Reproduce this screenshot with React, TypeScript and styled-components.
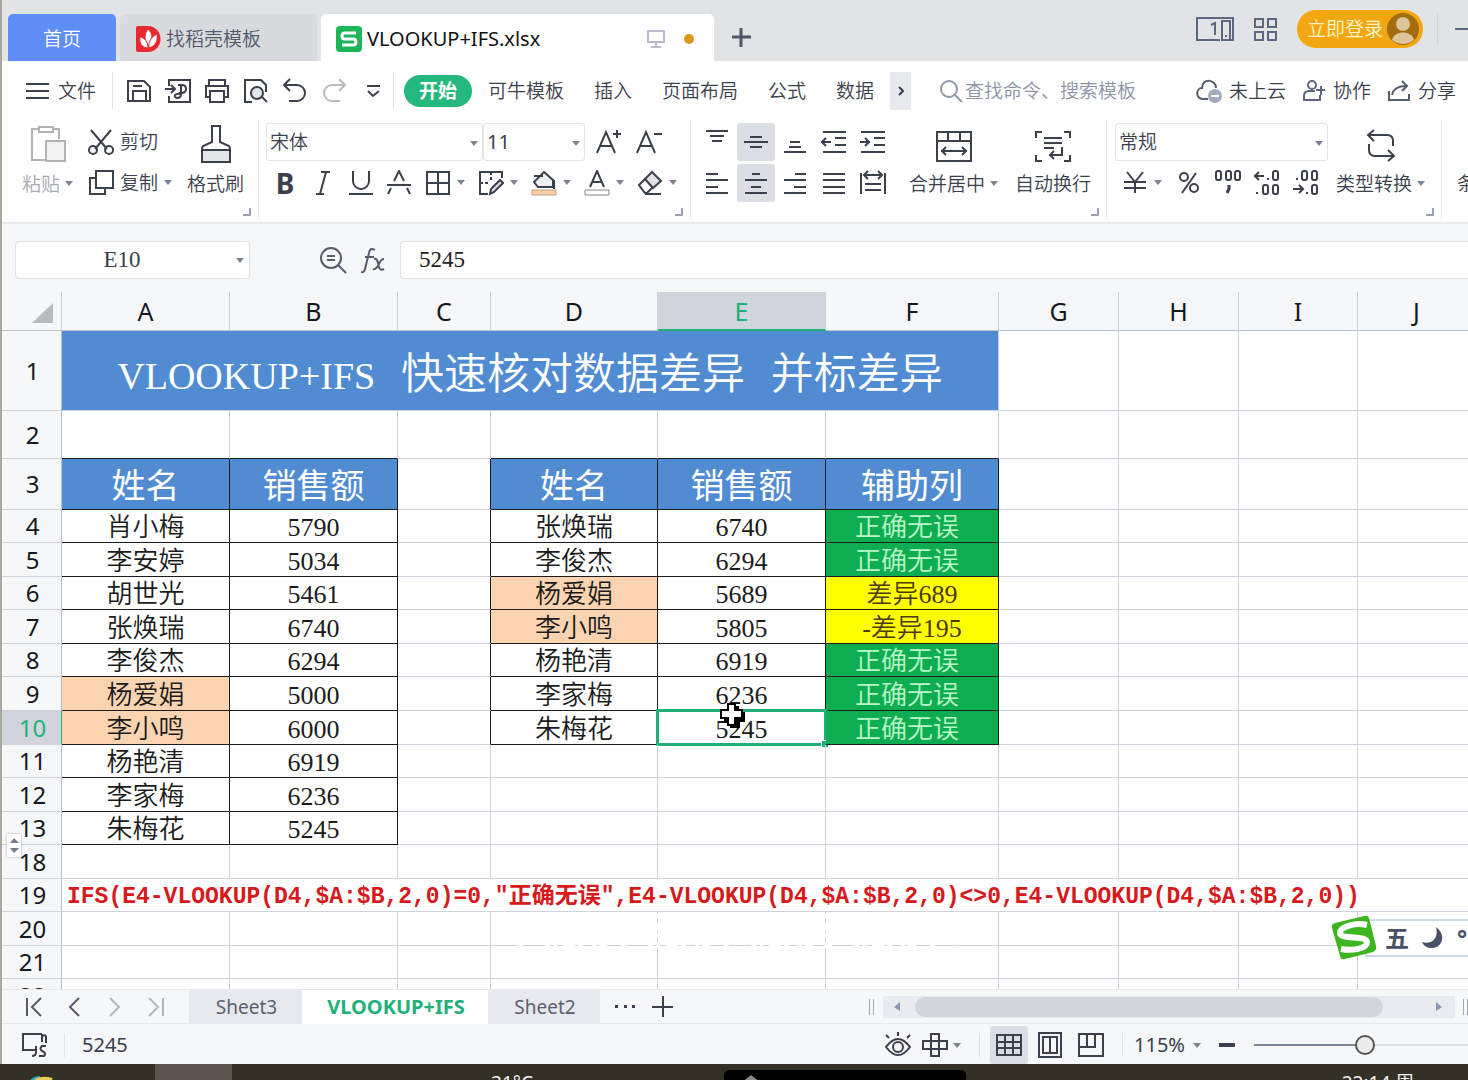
import React from "react";
import styled, { createGlobalStyle, css } from "styled-components";

const ui = `"Noto Sans", "Noto Sans CJK SC", sans-serif`;
const song = `"Liberation Serif", "Noto Sans CJK SC", serif`;
const ink = "#3b404d";
const green = "#22b07a";

const Global = createGlobalStyle`
  * { box-sizing: border-box; }
  body { margin: 0; background: #f5f7f9; overflow: hidden; }
  button, input, select { font: inherit; color: inherit; background: none; border: 0; padding: 0; margin: 0; border-radius: 0; }
  svg { display: block; flex: none; }
`;

/* ---------- shell ---------- */
const Shell = styled.div`
  height: 100vh;
  display: flex;
  flex-direction: column;
  overflow: hidden;
  font-family: ${ui};
  font-size: 19px;
  line-height: 28px;
  font-weight: 350;
  color: ${ink};
  white-space: nowrap;
`;
const Window = styled.div`
  flex: 1;
  min-height: 0;
  display: flex;
  flex-direction: column;
  border-left: 2px solid #a9a69d;
  overflow: hidden;
`;
const Row = styled.div<{ $gap?: number }>`
  display: flex;
  align-items: center;
  gap: ${(p) => p.$gap ?? 0}px;
`;
const Divider = styled.span<{ $h: number; $l?: number; $r?: number }>`
  flex: none;
  width: 1px;
  height: ${(p) => p.$h}px;
  margin-left: ${(p) => p.$l ?? 0}px;
  margin-right: ${(p) => p.$r ?? 0}px;
  background: #dfe1e5;
`;
const Spacer = styled.span`
  flex: 1;
`;
const Plain = styled.button`
  display: flex;
  align-items: center;
  flex: none;
`;

/* ---------- icons ---------- */
type IconProps = { w?: number; h?: number; c?: string; s?: number; children: React.ReactNode };
const Icon = ({ w = 26, h = 26, c = ink, s = 2, children }: IconProps) => (
  <svg width={w} height={h} viewBox={`0 0 ${w} ${h}`} fill="none" stroke={c} strokeWidth={s} aria-hidden="true">
    {children}
  </svg>
);
const Caret = ({ c = "#7c8494" }: { c?: string }) => (
  <svg width="8" height="5" viewBox="0 0 8 5" fill={c} aria-hidden="true">
    <path d="M0 0h8L4 5z" />
  </svg>
);

/* ---------- document tabs ---------- */
const TabStrip = styled.header`
  display: flex;
  flex: none;
  align-items: flex-end;
  height: 61px;
  padding-left: 6px;
  background: #e2e3e5;
`;
const DocTab = styled.button<{ $w: number; $kind: "home" | "idle" | "open" }>`
  display: flex;
  align-items: center;
  flex: none;
  gap: 5px;
  width: ${(p) => p.$w}px;
  height: 47px;
  margin-right: 4px;
  padding: 2px 16px 0;
  border-radius: 5px 5px 0 0;
  ${(p) => p.$kind === "home" && css`background: #5f8ff6; color: #fff; justify-content: center;`}
  ${(p) => p.$kind === "idle" && css`background: #d9dadd; color: #50586a;`}
  ${(p) => p.$kind === "open" && css`background: #fff; color: #111; margin-right: 0; font-size: 20px; font-weight: 400; padding-left: 15px;`}
`;
const Dot = styled.span`
  width: 10px;
  height: 10px;
  margin: 0 4px 0 14px;
  border-radius: 50%;
  background: #dd9615;
`;
const NewTab = styled(Plain)`
  height: 47px;
  padding: 0 18px;
`;
const Account = styled.div`
  display: flex;
  align-items: center;
  align-self: flex-start;
  height: 58px;
  gap: 20px;
`;
const Login = styled.button`
  display: flex;
  align-items: center;
  gap: 4px;
  height: 38px;
  width: 126px;
  padding-left: 10px;
  border-radius: 19px;
  background: #f2a60f;
  color: #fff6d0;
`;
const Minimise = styled(Row)`
  margin-left: -6px;
`;
const Bar = styled.span`
  width: 1px;
  height: 31px;
  margin-right: 17px;
  background: #cfd1d6;
`;

/* ---------- menu bar ---------- */
const MenuBar = styled.nav`
  display: flex;
  align-items: center;
  flex: none;
  height: 59px;
  padding: 0 12px 0 24px;
  background: #fff;
`;
const FileMenu = styled(Plain)`
  gap: 9px;
`;
const Quick = styled.div`
  display: flex;
  align-items: center;
  gap: 13px;
  margin: 0 7px 0 13px;
`;
const Menus = styled.div`
  display: flex;
  align-items: center;
  gap: 30px;
  margin: 0 16px;
`;
const ActiveMenu = styled.button`
  width: 68px;
  height: 32px;
  margin-left: 10px;
  border-radius: 16px;
  background: #25b87e;
  color: #fff;
  font-weight: 700;
`;
const More = styled(Plain)`
  justify-content: center;
  width: 21px;
  height: 38px;
  background: #e6e9ed;
`;
const Search = styled.label`
  display: flex;
  align-items: center;
  gap: 2px;
  width: 200px;
  margin-left: 28px;
  input { width: 174px; outline: none; }
  input::placeholder { color: #8c93a5; opacity: 1; }
`;
const Actions = styled.div`
  display: flex;
  align-items: center;
  gap: 16px;
  button { gap: 7px; }
`;

/* ---------- ribbon ---------- */
const Ribbon = styled.section`
  display: flex;
  flex: none;
  height: 104px;
  overflow: hidden;
  background: #fff;
  border-bottom: 2px solid #e9eaec;
`;
const Group = styled.div<{ $w: number; $pad: number }>`
  display: grid;
  grid-template-rows: 84px 12px;
  flex: none;
  width: ${(p) => p.$w}px;
  height: 99px;
  padding-left: ${(p) => p.$pad}px;
  border-right: 1px solid #ebecef;
`;
const GroupBody = styled.div<{ $gap?: number }>`
  display: flex;
  align-items: stretch;
  gap: ${(p) => p.$gap ?? 0}px;
`;
const Launcher = styled.button`
  justify-self: end;
  align-self: end;
  width: 8px;
  height: 8px;
  margin-right: 7px;
  border-right: 2px solid #9aa0ae;
  border-bottom: 2px solid #9aa0ae;
`;
const TwoRows = styled.div`
  display: grid;
  grid-template-rows: 41px 41px;
  align-content: start;
  align-items: center;
  padding-top: 1px;
`;
const Big = styled.button<{ $faded?: boolean }>`
  display: grid;
  grid-template-rows: 43px 41px;
  justify-items: center;
  align-items: center;
  align-self: start;
  flex: none;
  color: ${(p) => (p.$faded ? "#a9abb0" : ink)};
  > svg { align-self: end; }
`;
const Label = styled.span`
  display: flex;
  align-items: center;
  gap: 5px;
`;
const Tool = styled.button<{ $w?: number; $on?: boolean }>`
  display: flex;
  align-items: center;
  justify-content: center;
  flex: none;
  gap: 6px;
  width: ${(p) => p.$w ?? 38}px;
  height: 38px;
  border-radius: 3px;
  background: ${(p) => (p.$on ? "#dbdfe5" : "transparent")};
`;
const TextTool = styled(Plain)`
  gap: 6px;
`;
const Bold = styled.span`
  font: 700 28px/30px "Noto Sans", sans-serif;
`;
const Picker = styled.label<{ $w: number; $digits?: boolean }>`
  position: relative;
  flex: none;
  display: block;
  width: ${(p) => p.$w}px;
  height: 38px;
  border: 1px solid #e4e5e8;
  border-radius: 3px;
  font-weight: ${(p) => (p.$digits ? 400 : 350)};
  font-size: ${(p) => (p.$digits ? 20 : 19)}px;
  select { appearance: none; width: 100%; height: 100%; padding-left: 3px; outline: none; }
  svg { position: absolute; right: 4px; top: 17px; pointer-events: none; }
`;

/* ---------- formula bar ---------- */
const FormulaBar = styled.section`
  display: flex;
  align-items: center;
  flex: none;
  height: 68px;
  padding: 4px 0 0 13px;
  background: #f5f7f9;
  font-family: ${song};
  font-size: 23px;
`;
const NameBox = styled.label`
  display: flex;
  align-items: center;
  width: 235px;
  height: 38px;
  margin-right: 70px;
  padding-right: 5px;
  border: 1px solid #dfe1e4;
  border-radius: 4px;
  background: #fff;
  input { width: 100%; min-width: 0; text-align: center; padding-right: 8px; outline: none; }
`;
const FormulaInput = styled.input`
  flex: 1;
  min-width: 0;
  height: 38px;
  margin-left: 14px;
  && { padding: 0 18px; border: 1px solid #dfe1e4; border-right: 0; border-radius: 4px 0 0 4px; background: #fff; color: #222; }
`;

/* ---------- sheet ---------- */
const SheetArea = styled.main`
  position: relative;
  flex: 1;
  min-height: 0;
  overflow: hidden;
  background: #fff;
`;
const Grid = styled.table`
  width: 1474px;
  min-width: 100%;
  table-layout: fixed;
  border-collapse: separate;
  border-spacing: 0;
`;
const line = "#cdd2dc";
const Head = styled.th<{ $on?: boolean }>`
  height: 39px;
  padding: 0;
  font-size: 25px;
  font-weight: 400;
  color: ${(p) => (p.$on ? green : "#16181d")};
  background: ${(p) => (p.$on ? "#d1d4db" : "#f5f7f9")};
  border-right: 1px solid ${line};
  border-bottom: ${(p) => (p.$on ? `2px solid ${green}` : "1px solid #bcc3d0")};
`;
const Corner = styled(Head)`
  svg { margin: 4px 0 0 30px; }
`;
const RowHead = styled.th<{ $h: number; $on?: boolean }>`
  height: ${(p) => p.$h}px;
  padding: 0 0 0 2px;
  font-size: 24px;
  line-height: 30px;
  font-weight: 400;
  color: ${(p) => (p.$on ? green : "#16181d")};
  background: ${(p) => (p.$on ? "#d1d4db" : "#f5f7f9")};
  border-right: 1px solid ${(p) => (p.$on ? green : "#b5bdcc")};
  border-bottom: 1px solid ${line};
`;
const fills = {
  none: css``,
  title: css`background: #518cd3; color: #fff; font-size: 43px; padding-top: 12px;`,
  head: css`background: #518cd3; color: #fff; font-size: 34px; font-weight: 400; padding-top: 6px;`,
  peach: css`background: #fad4b0;`,
  ok: css`background: #0eae50; color: #b9f7cb;`,
  diff: css`background: #ffff00; color: #4a3a10;`,
};
type Fill = keyof typeof fills;
const Cell = styled.td<{ $fill?: Fill; $r?: string; $b?: string }>`
  position: relative;
  padding: 4px 0 0;
  overflow: visible;
  text-align: center;
  font-family: ${song};
  font-size: 26px;
  line-height: 28px;
  color: #1b1b1b;
  border-right: 1px solid ${(p) => p.$r ?? line};
  border-bottom: 1px solid ${(p) => p.$b ?? line};
  ${(p) => fills[p.$fill ?? "none"]}
`;
const Title = styled.span`
  font-family: "Liberation Mono", "Noto Sans CJK SC", monospace;
  font-weight: 350;
`;
const Latin = styled.span`
  font-family: "Liberation Serif", serif;
  font-size: 38px;
`;
const Formula = styled.td`
  padding: 4px 0 0 5px;
  font-family: "Liberation Mono", "Noto Sans CJK SC", monospace;
  font-size: 23px;
  line-height: 28px;
  font-weight: 700;
  color: #d7191c;
  border-bottom: 1px solid ${line};
`;
const OkText = styled.span`
  padding-right: 10px;
`;
const Selection = styled.span`
  position: absolute;
  inset: -2px;
  border: 3px solid ${green};
  &::after {
    content: "";
    position: absolute;
    right: -4px;
    bottom: -4px;
    width: 6px;
    height: 6px;
    background: ${green};
    outline: 1px solid #fff;
  }
`;
const Pointer = styled.svg`
  position: absolute;
  left: 61px;
  top: -9px;
`;
const Expander = styled.button`
  position: absolute;
  left: 5px;
  top: 542px;
  display: grid;
  align-content: center;
  justify-items: center;
  gap: 5px;
  width: 14px;
  height: 23px;
  background: #fff;
  box-shadow: 0 0 2px #9aa0ae;
`;
const Residue = styled.svg`
  position: absolute;
  left: 516px;
  top: 622px;
`;
const Ime = styled.div`
  position: absolute;
  right: 0;
  top: 623px;
  display: flex;
  align-items: center;
  height: 45px;
  color: #4a5068;
`;
const ImeBar = styled.div`
  display: flex;
  align-items: center;
  gap: 12px;
  width: 103px;
  height: 38px;
  margin-left: -12px;
  padding-left: 18px;
  overflow: hidden;
  border: 2px solid #cfd9e2;
  border-right: 0;
  background: #fff;
  font-size: 24px;
  font-weight: 700;
`;
const ImeLogo = styled.svg`
  z-index: 1;
`;

/* ---------- sheet tabs and status ---------- */
const SheetBar = styled.footer`
  display: flex;
  align-items: center;
  flex: none;
  height: 35px;
  border-top: 1px solid #e6e8ec;
  border-bottom: 1px solid #e6e8ec;
  background: #f5f7f9;
`;
const SheetNav = styled.div`
  display: flex;
  gap: 24px;
  width: 187px;
  padding-left: 23px;
`;
const SheetTab = styled.button<{ $w: number; $on?: boolean }>`
  flex: none;
  width: ${(p) => p.$w}px;
  height: 34px;
  padding-left: 2px;
  background: ${(p) => (p.$on ? "#fff" : "#e8e9ee")};
  color: ${(p) => (p.$on ? green : "#5a6070")};
  font-size: ${(p) => (p.$on ? 20 : 19)}px;
  font-weight: ${(p) => (p.$on ? 700 : 400)};
`;
const SheetTools = styled(Row)`
  padding-left: 14px;
`;
const Scroll = styled.div`
  display: flex;
  align-items: center;
  justify-content: space-between;
  width: 572px;
  height: 22px;
  margin: 0 8px 0 9px;
  padding: 0 13px 0 11px;
  background: #e8ebf0;
`;
const Thumb = styled.div`
  width: 468px;
  height: 20px;
  margin-right: 38px;
  border-radius: 10px;
  background: #d2d5d9;
`;
const Grip = styled.span`
  flex: none;
  width: 5px;
  height: 16px;
  border: solid #a3a9b5;
  border-width: 0 1px;
`;
const StatusBar = styled.footer`
  display: flex;
  align-items: center;
  flex: none;
  height: 40px;
  padding: 2px 0 0 20px;
  background: #f5f7f9;
  font-size: 20px;
  font-weight: 400;
`;
const Views = styled.div`
  display: flex;
  align-items: center;
  gap: 3px;
`;
const Zoom = styled.label`
  display: flex;
  align-items: center;
  width: 67px;
  margin-right: 18px;
  select { appearance: none; width: 59px; outline: none; }
`;
const Slider = styled.input`
  && { appearance: none; width: 214px; height: 20px; margin-left: 19px; background: linear-gradient(90deg, #7d879c 52%, #dfe2e8 52%) center / 100% 2px no-repeat; }
  &::-webkit-slider-thumb { appearance: none; width: 20px; height: 20px; border-radius: 50%; border: 2px solid #555; background: #ececec; }
`;
const Taskbar = styled.div`
  display: flex;
  flex: none;
  height: 16px;
  overflow: hidden;
  background: #343026;
  color: #f3f3f3;
  font-weight: 400;
`;
const Task = styled.span<{ $w: number; $bg?: string }>`
  flex: none;
  display: flex;
  justify-content: center;
  width: ${(p) => p.$w}px;
  height: 40px;
  padding-top: 5px;
  background: ${(p) => p.$bg ?? "none"};
`;
const Player = styled.span`
  flex: none;
  width: 242px;
  height: 40px;
  margin-top: 6px;
  padding: 5px 0 0 18px;
  border-radius: 5px;
  background: #000;
`;

/* ---------- drawings ---------- */
const AlignIcon = ({ d }: { d: string }) => (
  <Icon>
    <path d={d} />
  </Icon>
);
const UnderA = () => <path d="M6 17 13 1l7 16M8 12h10" />;

const rowsLeft = [
  ["肖小梅", "5790"], ["李安婷", "5034"], ["胡世光", "5461"], ["张焕瑞", "6740"], ["李俊杰", "6294"],
  ["杨爱娟", "5000"], ["李小鸣", "6000"], ["杨艳清", "6919"], ["李家梅", "6236"], ["朱梅花", "5245"],
];
const rowsRight = [
  ["张焕瑞", "6740", "正确无误"], ["李俊杰", "6294", "正确无误"], ["杨爱娟", "5689", "差异689"],
  ["李小鸣", "5805", "-差异195"], ["杨艳清", "6919", "正确无误"], ["李家梅", "6236", "正确无误"], ["朱梅花", "5245", "正确无误"],
];
const heights = [33, 34, 33, 34, 33, 34, 34, 33, 34, 33];
const cols = [60, 168, 168, 93, 167, 168, 173, 120, 120, 119, 118];
const black = "#1c1c1c";
const marked = ["杨爱娟", "李小鸣"];
const Blanks = ({ n }: { n: number }) => <>{Array.from({ length: n }, (_, i) => <Cell key={i} />)}</>;

const DataRow = ({ i }: { i: number }) => {
  const [name, sum] = rowsLeft[i];
  const right = rowsRight[i];
  const active = i === 6;
  return (
    <tr>
      <RowHead $h={heights[i]} $on={active} scope="row">{i + 4}</RowHead>
      <Cell $r={black} $b={black} $fill={i > 4 && marked.includes(name) ? "peach" : "none"}>{name}</Cell>
      <Cell $r={black} $b={black}>{sum}</Cell>
      {right ? (
        <>
          <Cell $r={black} />
          <Cell $r={black} $b={black} $fill={marked.includes(right[0]) ? "peach" : "none"}>{right[0]}</Cell>
          <Cell $r={black} $b={black}>
            {right[1]}
            {active && <Selection />}
            {active && (
              <Pointer width="27" height="27" viewBox="0 0 27 27" aria-hidden="true">
                <path d="M10 4h10v6h6v10h-5v6H11v-5H5V10h5z" fill="#000" />
                <path d="M9 2h7v6h7v8h-7v7H9v-7H2V8h7z" fill="#fff" stroke="#000" strokeWidth="2" />
              </Pointer>
            )}
          </Cell>
          <Cell $r={black} $b={black} $fill={right[2] === "正确无误" ? "ok" : "diff"}>
            {right[2] === "正确无误" ? <OkText>{right[2]}</OkText> : right[2]}
          </Cell>
          <Blanks n={4} />
        </>
      ) : (
        <Blanks n={8} />
      )}
    </tr>
  );
};

const Sheet = () => (
  <SheetArea>
    <Grid>
      <colgroup>{cols.map((w, i) => <col key={i} style={{ width: w }} />)}</colgroup>
      <thead>
        <tr>
          <Corner aria-label="全选">
            <svg width="21" height="20" viewBox="0 0 21 20"><path d="M21 0v20H0z" fill="#b9bbbf" /></svg>
          </Corner>
          {"ABCDEFGHIJ".split("").map((c) => <Head key={c} scope="col" $on={c === "E"}>{c}</Head>)}
        </tr>
      </thead>
      <tbody>
        <tr>
          <RowHead $h={80} scope="row">1</RowHead>
          <Cell colSpan={6} $fill="title"><Title><Latin>VLOOKUP+IFS</Latin> 快速核对数据差异 并标差异</Title></Cell>
          <Blanks n={4} />
        </tr>
        <tr>
          <RowHead $h={48} scope="row">2</RowHead>
          <Cell $b={black} /><Cell $b={black} /><Cell /><Cell $b={black} /><Cell $b={black} /><Cell $b={black} />
          <Blanks n={4} />
        </tr>
        <tr>
          <RowHead $h={51} scope="row">3</RowHead>
          {["姓名", "销售额", "", "姓名", "销售额", "辅助列"].map((t, i) => (
            <Cell key={i} $r={black} $b={t ? black : undefined} $fill={t ? "head" : "none"}>{t}</Cell>
          ))}
          <Blanks n={4} />
        </tr>
        {rowsLeft.map((_, i) => <DataRow key={i} i={i} />)}
        <tr><RowHead $h={34} scope="row">18</RowHead><Blanks n={10} /></tr>
        <tr>
          <RowHead $h={33} scope="row">19</RowHead>
          <Formula colSpan={10}>IFS(E4-VLOOKUP(D4,$A:$B,2,0)=0,"正确无误",E4-VLOOKUP(D4,$A:$B,2,0)&lt;&gt;0,E4-VLOOKUP(D4,$A:$B,2,0))</Formula>
        </tr>
        {[[20, 34], [21, 33], [22, 34]].map(([n, h]) => (
          <tr key={n}><RowHead $h={h} scope="row">{n}</RowHead><Blanks n={10} /></tr>
        ))}
      </tbody>
    </Grid>
    <Expander aria-label="展开隐藏行">
      <svg width="9" height="16" viewBox="0 0 9 16" fill="#737a8a"><path d="M0 5h9L4 0zM0 10h9l-5 5z" /></svg>
    </Expander>
    <Residue width="440" height="36" viewBox="0 0 440 36" fill="none" stroke="#fff" strokeWidth="3" aria-hidden="true">
      <path d="M0 32h440" strokeDasharray="5 22 5 4 3 6 12 3 5 9 4 3 8 14" />
      <path d="M140 0v34M308 0v34" strokeDasharray="4 5 7 3" />
    </Residue>
    <Ime>
      <ImeLogo width="46" height="45" viewBox="0 0 46 45" aria-hidden="true">
        <path d="M4 8 33 1q4-1 5 2l7 28q1 4-3 6L14 44q-4 1-5-3L1 13q-1-4 3-5z" fill="#3cb521" />
        <path d="M36 10C24 7 9 12 9 18c0 7 27 2 27 9 0 7-15 9-26 7" fill="none" stroke="#fff" strokeWidth="6" />
      </ImeLogo>
      <ImeBar>
        五
        <svg width="24" height="24" viewBox="0 0 24 24"><path d="M15 1c11 8 6 21-4 21-5 0-8-2-10-6 10 3 17-4 14-15z" fill="#4a5068" /></svg>
        °
      </ImeBar>
    </Ime>
  </SheetArea>
);

export default function App() {
  return (
    <Shell>
      <Global />
      <Window>
        <TabStrip>
          <DocTab $w={108} $kind="home">首页</DocTab>
          <DocTab $w={197} $kind="idle">
            <svg width="25" height="26" viewBox="0 0 25 26">
              <path d="M2 0h9c18 0 18 26 0 26H2q-2 0-2-2V2q0-2 2-2z" fill="#e9292f" />
              <path d="M12 3c5 4 5 11 1 17C8 15 8 8 12 3z" fill="#fff" stroke="#e9292f" />
              <path d="M4 11c5 1 8 5 8 11-6 0-9-5-8-11zM21 8c-6 3-9 8-8 14 7-2 9-8 8-14z" fill="#fff" stroke="#e9292f" />
            </svg>
            找稻壳模板
          </DocTab>
          <DocTab $w={393} $kind="open">
            <svg width="26" height="26" viewBox="0 0 26 26">
              <rect width="26" height="26" rx="4" fill="#1eb45a" />
              <path d="M20 7H9Q6 7 6 10t3 3h8q3 0 3 3t-3 3H6" fill="none" stroke="#fff" strokeWidth="3" />
            </svg>
            <span>VLOOKUP+IFS.xlsx</span>
            <Spacer />
            <Icon w={18} h={18} c="#b6bccb"><path d="M1 1h16v11H1zM9 12v5M4 17h10" /></Icon>
            <Dot />
          </DocTab>
          <NewTab aria-label="新建标签"><Icon w={19} h={19} c="#4d566d" s={3}><path d="M9 0v19M0 9h19" /></Icon></NewTab>
          <Spacer />
          <Account>
            <Plain aria-label="窗口">
              <Icon w={38} h={24} c="#5d6780">
                <path d="M24 23H1V1h36v22h-5M26 4h8v19h-8zM29 19h2" />
                <path d="M15 8l4-2v12" />
              </Icon>
            </Plain>
            <Plain aria-label="应用"><Icon w={23} h={23} c="#5d6780"><path d="M1 1h8v8H1zM14 1h8v8h-8zM1 14h8v8H1zM14 14h8v8h-8z" /></Icon></Plain>
            <Login>
              立即登录
              <svg width="32" height="32" viewBox="0 0 32 32">
                <circle cx="16" cy="16" r="16" fill="#a36c0c" />
                <circle cx="16" cy="11" r="7" fill="#dfc59a" />
                <path d="M5 27c2-10 20-10 22 0q-11 8-22 0z" fill="#dfc59a" />
              </svg>
            </Login>
            <Minimise>
              <Bar />
              <Icon w={13} h={20} c="#5d6780"><path d="M0 10h13" /></Icon>
            </Minimise>
          </Account>
        </TabStrip>

        <MenuBar>
          <FileMenu><Icon w={23} h={16}><path d="M0 1h23M0 8h23M0 15h23" /></Icon>文件</FileMenu>
          <Divider $h={37} $l={16} />
          <Quick>
            <Plain aria-label="保存"><Icon><path d="M2 3h16l6 6v14H2zM7 23V13h13v10M7 8h9" /></Icon></Plain>
            <Plain aria-label="输出PDF"><Icon><path d="M4 8V2h21v22H4v-6M0 11h9M6 7l4 4-4 4M13 7h4q4 0 4 4t-5 4h-2M16 8v8q0 4-4 4-3-1-2-3 2-2 6-1" /></Icon></Plain>
            <Plain aria-label="打印"><Icon><path d="M5 8V2h16v6M6 19H2V8h22v11h-4M6 13h14v11H6zM6 8h14" /></Icon></Plain>
            <Plain aria-label="打印预览"><Icon><path d="M9 24H2V2h16l5 5v7" /><circle cx="14" cy="15" r="6" fill="#e2e5ea" /><path d="M19 19l5 5" /></Icon></Plain>
            <Plain aria-label="撤销"><Icon><path d="M8 1 2 7l6 6M3 7h12a8 8 0 0 1 0 16H7" /></Icon></Plain>
            <Plain aria-label="恢复"><Icon c="#b8bbc1"><path d="m18 1 6 6-6 6M23 7H11a8 8 0 0 0 0 16h8" /></Icon></Plain>
            <Plain aria-label="自定义"><Icon><path d="M7 8h13M8 13l5 5 6-5" /></Icon></Plain>
          </Quick>
          <Divider $h={37} />
          <ActiveMenu>开始</ActiveMenu>
          <Menus>
            <Plain>可牛模板</Plain><Plain>插入</Plain><Plain>页面布局</Plain><Plain>公式</Plain><Plain>数据</Plain>
          </Menus>
          <More aria-label="更多"><Icon w={6} h={10}><path d="m1 1 4 4-4 4" /></Icon></More>
          <Search>
            <Icon w={24} h={24} c="#9299a9"><circle cx="10" cy="10" r="8" /><path d="m16 16 7 7" /></Icon>
            <input placeholder="查找命令、搜索模板" aria-label="搜索" />
          </Search>
          <Spacer />
          <Actions>
            <Plain>
              <Icon w={26} h={24} c="#555c6b">
                <path d="M12 20H7C-1 19 0 9 6 9 6-1 20 0 20 9" />
                <circle cx="19" cy="17" r="6" fill="#a3abbd" stroke="#a3abbd" /><path d="M15 17h8" stroke="#fff" />
              </Icon>
              未上云
            </Plain>
            <Plain>
              <Icon w={24} h={24} c="#5d6780"><circle cx="10" cy="6" r="4" /><path d="M13 12H7q-5 0-5 5v4h16v-5M19 7v9M14 11h9" /></Icon>
              协作
            </Plain>
            <Plain>
              <Icon w={24} h={24} c="#555c6b"><path d="M2 12v9h20v-6M5 16Q7 7 19 7M15 2l5 5-5 5" /></Icon>
              分享
            </Plain>
          </Actions>
        </MenuBar>

        <Ribbon>
          <Group $w={257} $pad={20}>
            <GroupBody $gap={15}>
              <Big $faded>
                <Icon w={36} h={38} c="#b2b3b6"><path d="M9 4H2v31h13M24 4h5v10M9 2h14v5H9z" /><path d="M16 16h19v20H16z" fill="#f3f3f3" /></Icon>
                <Label>粘贴<Caret /></Label>
              </Big>
              <TwoRows>
                <TextTool>
                  <Icon><path d="M3 1l16 19M23 1 7 20" /><circle cx="5" cy="21" r="4" /><circle cx="21" cy="21" r="4" /></Icon>剪切
                </TextTool>
                <TextTool>
                  <Icon><path d="M8 8H2v16h15v-6M8 1h17v17H8z" /></Icon>复制<Caret />
                </TextTool>
              </TwoRows>
              <Big>
                <Icon w={30} h={38}><path d="M11 1h8v16l9 4q1 1 1 4H1q0-3 1-4l9-4z" /><path d="M1 25h28v12H1z" fill="#e4e6ea" /></Icon>
                <Label>格式刷</Label>
              </Big>
            </GroupBody>
            <Launcher aria-label="剪贴板设置" />
          </Group>

          <Group $w={432} $pad={7}>
            <TwoRows>
              <Row>
                <Picker $w={217}><select aria-label="字体"><option>宋体</option></select><Caret /></Picker>
                <Picker $w={102} $digits><select aria-label="字号"><option>11</option></select><Caret /></Picker>
                <Tool $w={48} aria-label="增大字号"><Icon><path d="M1 24 10 3l9 21M4 17h12M17 5h8M21 1v8" /></Icon></Tool>
                <Tool $w={32} aria-label="减小字号"><Icon><path d="M1 24 10 3l9 21M4 17h12M18 5h8" /></Icon></Tool>
              </Row>
              <Row>
                <Tool aria-label="加粗"><Bold>B</Bold></Tool>
                <Tool aria-label="倾斜"><Icon><path d="M11 2h9M6 24h8M16 2l-6 22" /></Icon></Tool>
                <Tool aria-label="下划线"><Icon><path d="M5 1v10a8 8 0 0 0 16 0V1M1 24h24" /></Icon></Tool>
                <Tool aria-label="删除线"><Icon><path d="M1 15h24M8 11l5-10 5 10M5 18l-3 6M21 18l3 6" /></Icon></Tool>
                <Tool $w={53} aria-label="边框"><Icon><path d="M2 2h22v22H2zM13 2v22M2 13h22" /></Icon><Caret /></Tool>
                <Tool $w={53} aria-label="绘制边框"><Icon><path d="M10 24H2V2h22v6" /><path d="M13 2v10M2 13h10" strokeDasharray="3 2" /><path d="m13 19 9-9 3 3-9 9-4 2z" fill="#dcdfe5" /></Icon><Caret /></Tool>
                <Tool $w={53} aria-label="填充颜色"><Icon><path d="m13 2 9 8v7H7l-4-5z" fill="#eef0f3" /><path d="M3 6h9M23 10v9" /><path d="M1 20h24v5H1z" fill="#f8cda8" stroke="#c69d7c" strokeWidth="1" /></Icon><Caret /></Tool>
                <Tool $w={53} aria-label="字体颜色"><Icon><UnderA /><path d="M1 20h24v5H1z" fill="#fff" stroke="#888" strokeWidth="1" /></Icon><Caret /></Tool>
                <Tool $w={53} aria-label="清除"><Icon><path d="m2 15 6-6 8 8-6 6H8z" /><path d="m8 9 7-7 9 9-8 7z" fill="#e0e2e6" /><path d="M8 24h16" /></Icon><Caret /></Tool>
              </Row>
            </TwoRows>
            <Launcher aria-label="字体设置" />
          </Group>

          <Group $w={416} $pad={7}>
            <GroupBody $gap={17}>
              <TwoRows>
                <Row $gap={1}>
                  <Tool aria-label="顶端对齐"><AlignIcon d="M2 2h22M6 7h14M8 12h10" /></Tool>
                  <Tool $on aria-label="垂直居中"><AlignIcon d="M7 8h12M1 13h24M7 18h12" /></Tool>
                  <Tool aria-label="底端对齐"><AlignIcon d="M8 13h10M7 18h12M2 23h22" /></Tool>
                  <Tool aria-label="减少缩进"><AlignIcon d="M2 3h23M14 9h11M14 16h11M2 23h23M0 13h10M5 9l-4 4 4 4" /></Tool>
                  <Tool aria-label="增加缩进"><AlignIcon d="M1 3h24M14 9h11M14 16h11M1 23h24M0 13h10M5 9l4 4-4 4" /></Tool>
                </Row>
                <Row $gap={1}>
                  <Tool aria-label="左对齐"><AlignIcon d="M2 4h12M2 10h22M2 17h12M2 23h22" /></Tool>
                  <Tool $on aria-label="水平居中"><AlignIcon d="M9 4h8M2 10h22M8 17h10M2 23h22" /></Tool>
                  <Tool aria-label="右对齐"><AlignIcon d="M13 4h11M2 10h22M12 17h12M2 23h22" /></Tool>
                  <Tool aria-label="两端对齐"><AlignIcon d="M2 4h22M2 10h22M2 17h22M2 23h22" /></Tool>
                  <Tool aria-label="分散对齐"><AlignIcon d="M1 3v21M25 3v21M4 5h18M8 1 4 5l4 4M18 1l4 4-4 4M5 14h16M5 20h16" /></Tool>
                </Row>
              </TwoRows>
              <Big>
                <Icon w={36} h={34}><path d="M1 3h34v29H1zM1 12h34M12 3v9M24 3v9M5 22h26M10 18l-4 4 4 4M26 18l4 4-4 4" /></Icon>
                <Label>合并居中<Caret /></Label>
              </Big>
              <Big>
                <Icon w={36} h={34}><path d="M1 9V3h6M29 3h6v6M1 26v6h6M29 32h6v-6M9 9h18M9 14h18M9 19h10M27 18v8H15M19 22l-4 4 4 4" /></Icon>
                <Label>自动换行</Label>
              </Big>
            </GroupBody>
            <Launcher aria-label="对齐设置" />
          </Group>

          <Group $w={335} $pad={8}>
            <GroupBody $gap={8}>
              <TwoRows>
                <Picker $w={213}><select aria-label="数字格式"><option>常规</option></select><Caret /></Picker>
                <Row $gap={1}>
                  <Tool $w={54} aria-label="货币"><Icon><path d="m5 2 8 10 8-10M2 12h22M2 18h22M13 12v11" /></Icon><Caret /></Tool>
                  <Tool aria-label="百分比"><Icon w={22}><circle cx="6" cy="7" r="4" /><circle cx="16" cy="18" r="4" /><path d="M18 3 4 23" /></Icon></Tool>
                  <Tool aria-label="千位分隔"><Icon w={28}><rect x="2" y="1" width="5" height="9" rx="2" /><rect x="12" y="1" width="5" height="9" rx="2" /><rect x="21" y="1" width="5" height="9" rx="2" /><path d="M15 15v4l-2 4" strokeWidth="3" /></Icon></Tool>
                  <Tool aria-label="增加小数"><Icon><path d="M0 6h10M5 2 1 6l4 4M13 9h2M2 23h2" /><rect x="19" y="1" width="5" height="9" rx="2" /><rect x="9" y="15" width="5" height="9" rx="2" /><rect x="19" y="15" width="5" height="9" rx="2" /></Icon></Tool>
                  <Tool aria-label="减少小数"><Icon><path d="M0 19h10M6 15l4 4-4 4M3 9h2M13 23h2" /><rect x="9" y="1" width="5" height="9" rx="2" /><rect x="19" y="1" width="5" height="9" rx="2" /><rect x="19" y="15" width="5" height="9" rx="2" /></Icon></Tool>
                </Row>
              </TwoRows>
              <Big>
                <Icon w={30} h={34}><path d="M8 1 2 6l6 6M2 6h19q6 0 6 6v5M3 15v6q0 6 6 6h18M22 21l6 6-6 5" /></Icon>
                <Label>类型转换<Caret /></Label>
              </Big>
            </GroupBody>
            <Launcher aria-label="数字设置" />
          </Group>
          <Group $w={120} $pad={15}>
            <GroupBody><Big><span /><Label>条件格式</Label></Big></GroupBody>
          </Group>
        </Ribbon>

        <FormulaBar>
          <NameBox><input aria-label="名称框" defaultValue="E10" /><Caret /></NameBox>
          <Row $gap={14}>
            <Icon w={27} h={27} c="#555c6b"><circle cx="11" cy="11" r="10" /><path d="m18 18 8 8M7 9h8M7 13h8" /></Icon>
            <Icon w={25} h={27} c="#555c6b"><path d="M14 3q-5-3-6 3L4 22q-1 4-4 3M4 10h9M13 12q3-1 4 4l1 4q1 4 5 2M23 12q-3 0-5 5-3 6-6 5" /></Icon>
          </Row>
          <FormulaInput aria-label="编辑栏" defaultValue="5245" />
        </FormulaBar>

        <Sheet />

        <SheetBar>
          <SheetNav>
            <Plain aria-label="第一个"><Icon w={18} h={20} c="#555c6b"><path d="M2 1v18M16 1 7 10l9 9" /></Icon></Plain>
            <Plain aria-label="上一个"><Icon w={16} h={20} c="#555c6b"><path d="m12 1-9 9 9 9" /></Icon></Plain>
            <Plain aria-label="下一个"><Icon w={16} h={20} c="#b4b7be"><path d="m3 1 9 9-9 9" /></Icon></Plain>
            <Plain aria-label="最后一个"><Icon w={18} h={20} c="#b4b7be"><path d="M16 1v18M2 1l9 9-9 9" /></Icon></Plain>
          </SheetNav>
          <SheetTab $w={113}>Sheet3</SheetTab>
          <SheetTab $w={186} $on>VLOOKUP+IFS</SheetTab>
          <SheetTab $w={112}>Sheet2</SheetTab>
          <SheetTools $gap={16}>
            <Plain aria-label="更多工作表"><Icon w={22} h={20} s={0}><path fill={ink} d="M1 8h3v3H1zM10 8h3v3h-3zM18 8h3v3h-3z" /></Icon></Plain>
            <Plain aria-label="新建工作表"><Icon w={21} h={21}><path d="M11 0v21M0 11h21" /></Icon></Plain>
          </SheetTools>
          <Spacer />
          <Grip />
          <Scroll>
            <svg width="6" height="9" viewBox="0 0 6 9" fill="#8b95b0"><path d="M6 0v9L0 5z" /></svg>
            <Thumb />
            <svg width="6" height="9" viewBox="0 0 6 9" fill="#8b95b0"><path d="M0 0v9l6-4z" /></svg>
          </Scroll>
          <Grip />
        </SheetBar>

        <StatusBar>
          <Icon><path d="M13 18H1V2h19M20 2v8M20 4q4-2 4 1v6M14 14v6q0 4-4 4M24 14h-4q-3 3 0 5 5 2 2 5h-5" /></Icon>
          <Divider $h={24} $l={16} $r={17} />
          <span>5245</span>
          <Spacer />
          <Row $gap={11}>
            <Icon><path d="M1 15q12-16 24 0-12 16-24 0zM13 0v4M1 3l3 3M25 3l-3 3" /><circle cx="13" cy="15" r="5" /></Icon>
            <Row $gap={5}><Icon><path d="M9 2h8v22H9zM1 9h24v8H1z" /></Icon><Caret /></Row>
          </Row>
          <Divider $h={24} $l={18} $r={10} />
          <Views>
            <Tool $on aria-label="普通视图"><Icon><path d="M1 3h24v20H1zM1 10h24M1 16h24M9 3v20M17 3v20" /></Icon></Tool>
            <Tool aria-label="页面布局"><Icon><path d="M2 1h22v24H2zM6 5h14v16H6zM13 5v16" /></Icon></Tool>
            <Tool aria-label="分页预览"><Icon><path d="M1 2h24v22H1zM1 15h16V2M9 2v13" /></Icon></Tool>
          </Views>
          <Divider $h={24} $l={12} $r={11} />
          <Zoom><select aria-label="缩放" defaultValue="115%"><option>115%</option></select><Caret /></Zoom>
          <Plain aria-label="缩小"><Icon w={16} h={16} s={4}><path d="M0 8h16" /></Icon></Plain>
          <Slider type="range" aria-label="缩放比例" defaultValue={52} />
        </StatusBar>
      </Window>
      <Taskbar>
        <Task $w={82}><svg width="26" height="20" viewBox="0 0 26 20" fill="none" strokeWidth="4"><path d="M2 14Q6 9 12 9" stroke="#2aa5c9" /><path d="M4 16Q10 7 24 11" stroke="#e8c95c" /></svg></Task>
        <Task $w={73} />
        <Task $w={77} $bg="#5b544c" />
        <Task $w={68} />
        <Task $w={424}>31°C</Task>
        <Player><svg width="18" height="12" viewBox="0 0 18 12"><path d="M9 0l9 7v5H0V7z" fill="#8a8a8a" /></svg></Player>
        <Spacer />
        <Task $w={180}>22:14 周</Task>
      </Taskbar>
    </Shell>
  );
}
